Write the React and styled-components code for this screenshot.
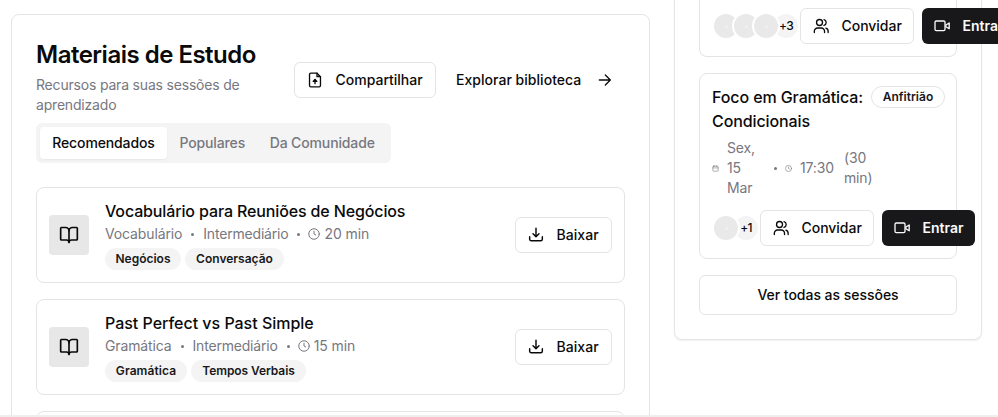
import React from "react";
import styled, { createGlobalStyle } from "styled-components";

const GlobalStyle = createGlobalStyle`
  *, *::before, *::after { box-sizing: border-box; }
  body {
    margin: 0;
    height: 417px;
    overflow: hidden;
    background: #fff;
    color: #0a0a0b;
    font-family: Inter, "Liberation Sans", sans-serif;
    font-size: 14px;
    line-height: 20px;
    -webkit-font-smoothing: antialiased;
  }
`;

const line = "#e4e4e7";
const muted = "#77777f";

const Page = styled.div`
  width: 998px;
  height: 417px;
  overflow: hidden;
  display: flex;
  flex-direction: column;
`;
const Columns = styled.main`
  flex: 1;
  min-height: 0;
  overflow: hidden;
  display: grid;
  grid-template-columns: 639px 308px;
  column-gap: 24px;
  align-items: start;
  padding-left: 11px;
`;
const BottomEdge = styled.div`
  height: 2px;
  flex: none;
  background: #eeeeef;
`;
const Panel = styled.section`
  border: 1px solid #e5e5e5;
  border-radius: 8px;
  padding: 24px;
  background: #fff;
`;
const Materials = styled(Panel)`
  margin-top: 14px;
`;
const Sessions = styled(Panel)`
  height: 340px;
  border-top: 0;
  border-radius: 0 0 8px 8px;
  padding-top: 0;
  box-shadow: 0 1px 2px rgba(0, 0, 0, 0.06);
`;
const Header = styled.header`
  display: flex;
  justify-content: space-between;
  align-items: flex-start;
  height: 84px;
`;
const Title = styled.h2`
  margin: 0 0 4px;
  font-size: 24px;
  line-height: 32px;
  font-weight: 600;
  letter-spacing: -0.5px;
`;
const Description = styled.p`
  margin: 0;
  width: 230px;
  color: ${muted};
  letter-spacing: -0.19px;
`;
const Actions = styled.div`
  display: flex;
  gap: 8px;
  margin-top: 23px;
`;
const Track = styled.span`
  letter-spacing: ${(p) => p.$ls || 0}px;
  white-space: nowrap;
`;
const Button = styled.button`
  display: inline-flex;
  align-items: center;
  justify-content: ${(p) => (p.$center ? "center" : "flex-start")};
  gap: ${(p) => (p.$variant === "ghost" ? 15.5 : 12.5)}px;
  flex: none;
  width: ${(p) => p.$w}px;
  height: ${(p) => p.$h || 36}px;
  padding: 0 12px;
  border: ${(p) => (p.$variant === "outline" ? `1px solid ${line}` : "0")};
  border-radius: 6px;
  background: ${(p) => (p.$variant === "solid" ? "#18181b" : "#fff")};
  color: ${(p) => (p.$variant === "solid" ? "#fafafa" : "inherit")};
  font: inherit;
  font-weight: ${(p) => (p.$variant === "solid" ? 600 : 500)};
  svg { flex: none; }
`;
const Tabs = styled.div`
  display: grid;
  grid-template-columns: 127px 90.5px 129.5px;
  width: 355px;
  height: 40px;
  padding: 4px;
  border-radius: 6px;
  background: #f4f4f4;
`;
const Tab = styled.button`
  border: 0;
  border-radius: 4px;
  padding: 0;
  font: inherit;
  font-weight: 500;
  background: ${(p) => (p.$active ? "#fff" : "transparent")};
  color: ${(p) => (p.$active ? "#0a0a0b" : muted)};
  box-shadow: ${(p) => (p.$active ? "0 1px 2px rgba(0,0,0,.06)" : "none")};
  letter-spacing: -0.13px;
`;
const MaterialList = styled.div`
  display: flex;
  flex-direction: column;
  gap: 16px;
  margin-top: 24px;
`;
const MaterialRow = styled.article`
  display: flex;
  align-items: center;
  gap: 16px;
  height: 96px;
  padding: 12px;
  border: 1px solid ${line};
  border-radius: 8px;
`;
const Thumb = styled.div`
  display: grid;
  place-items: center;
  flex: none;
  width: 40px;
  height: 40px;
  border-radius: 4px;
  background: #e7e7e7;
`;
const Info = styled.div`
  flex: 1;
  min-width: 0;
`;
const ItemTitle = styled.h3`
  margin: -1px 0 1px;
  font-size: 16px;
  line-height: 24px;
  font-weight: 500;
  letter-spacing: ${(p) => p.$ls || 0}px;
`;
const Meta = styled.div`
  display: flex;
  align-items: center;
  gap: 8px;
  color: ${muted};
`;
const Duration = styled.span`
  display: flex;
  align-items: center;
  gap: 4px;
  margin-left: -1px;
`;
const Dot = styled.i`
  width: 3px;
  height: 3px;
  margin: 0 1px;
  border-radius: 50%;
  flex: none;
  background: ${muted};
`;
const Badges = styled.div`
  display: flex;
  gap: 4px;
  margin-top: 4px;
`;
const Badge = styled.span`
  display: inline-flex;
  align-items: center;
  justify-content: center;
  flex: none;
  width: ${(p) => p.$w}px;
  height: 22px;
  border: 1px solid ${(p) => (p.$outline ? line : "transparent")};
  border-radius: 11px;
  background: ${(p) => (p.$outline ? "#fff" : "#f4f4f4")};
  color: #18181b;
  font-size: 12px;
  line-height: 16px;
  font-weight: 600;
  letter-spacing: ${(p) => p.$ls || 0}px;
`;
const SessionCard = styled.article`
  height: ${(p) => p.$h}px;
  margin-bottom: 16px;
  padding: ${(p) => (p.$continued ? 8 : 12)}px 12px 12px;
  border: 1px solid ${line};
  border-top-width: ${(p) => (p.$continued ? 0 : 1)}px;
  border-radius: ${(p) => (p.$continued ? "0 0 8px 8px" : "8px")};
`;
const SessionHead = styled.div`
  display: flex;
  justify-content: space-between;
  align-items: flex-start;
  margin-right: -1px;
`;
const Schedule = styled.div`
  display: grid;
  grid-template-columns: 7px 38px 4px 7px 36px 30px;
  column-gap: 8px;
  align-items: center;
  height: 60px;
  margin: 4px 0 12px;
  color: ${muted};
  letter-spacing: -0.15px;
`;
const DateText = styled.span`
  width: 30px;
`;
const SessionActions = styled.div`
  display: flex;
  width: max-content;
`;
const Avatars = styled.div`
  display: flex;
  align-items: center;
  height: 36px;
`;
const Avatar = styled.span`
  position: relative;
  display: grid;
  place-items: center;
  width: 28px;
  height: 28px;
  margin-right: -8px;
  border: 2px solid #fff;
  border-radius: 50%;
  background: #e9e9e9;
  &::after {
    content: "";
    width: 3px;
    height: 3px;
    border-radius: 50%;
    background: #f1f1f1;
  }
`;
const More = styled.span`
  width: 28px;
  height: 28px;
  border: 2px solid #fff;
  border-radius: 50%;
  background: #f4f4f4;
  font-size: 12px;
  font-weight: 500;
  line-height: 24px;
  text-align: center;
  letter-spacing: -0.7px;
`;
const ButtonPair = styled.div`
  display: flex;
  gap: 8px;
`;

const Svg = ({ size = 16, sw = 2, children }) => (
  <svg width={size} height={size} viewBox="0 0 24 24" fill="none" stroke="currentColor"
    strokeWidth={sw} strokeLinecap="round" strokeLinejoin="round" aria-hidden="true">
    {children}
  </svg>
);
const FileIcon = () => (
  <Svg>
    <path d="M15 1.8H5.8A2 2 0 0 0 3.8 3.8v16.4a2 2 0 0 0 2 2h12.4a2 2 0 0 0 2-2V7Z" />
    <path d="M15 1.8V7h5.2M12 17.5V12" />
    <path d="M9.2 14 12 11l2.8 3Z" fill="currentColor" />
  </Svg>
);
const ArrowIcon = () => (
  <Svg><path d="M3.5 12h16.5M12.5 4.5l7.5 7.5-7.5 7.5" /></Svg>
);
const BookIcon = () => (
  <Svg size={20}>
    <path d="M12 7v14" />
    <path d="M3 18a1 1 0 0 1-1-1V4a1 1 0 0 1 1-1h5a4 4 0 0 1 4 4 4 4 0 0 1 4-4h5a1 1 0 0 1 1 1v13a1 1 0 0 1-1 1h-6a3 3 0 0 0-3 3 3 3 0 0 0-3-3z" />
  </Svg>
);
const DownloadIcon = () => (
  <Svg sw={2.2}>
    <path d="M12 2v12.5M7.5 10l4.5 4.5 4.5-4.5M2.5 14.5v3.7a2.3 2.3 0 0 0 2.3 2.3h14.4a2.3 2.3 0 0 0 2.3-2.3v-3.7" />
  </Svg>
);
const ClockIcon = ({ size = 12 }) => (
  <Svg size={size}><circle cx="12" cy="12" r="10.5" /><path d="M12 6.5V12l3.5 2" /></Svg>
);
const CalendarIcon = () => (
  <Svg size={7}><rect x="3" y="4" width="18" height="17" rx="2" /><path d="M16 2v3M8 2v3M3 10h18" /></Svg>
);
const UsersIcon = () => (
  <Svg>
    <circle cx="9.8" cy="6.8" r="4.5" />
    <path d="M2 21.8v-2a4.8 4.8 0 0 1 4.8-4.8h5.7a4.8 4.8 0 0 1 4.8 4.8v2M16.5 2.4a4.6 4.6 0 0 1 0 8.8M19.3 15.2a4.8 4.8 0 0 1 3.4 4.6v2" />
  </Svg>
);
const VideoIcon = () => (
  <Svg>
    <rect x="1.5" y="4.5" width="15" height="14.5" rx="2" />
    <path d="m22.8 7.5-5 3v2.6l5 3Z" />
  </Svg>
);

const materials = [
  { title: "Vocabulário para Reuniões de Negócios", ls: -0.13, kind: "Vocabulário", kindLs: -0.13, time: "20 min",
    tags: [["Negócios", 76, 0], ["Conversação", 99, 0]] },
  { title: "Past Perfect vs Past Simple", ls: -0.02, kind: "Gramática", kindLs: -0.13, time: "15 min",
    tags: [["Gramática", 82, 0.08], ["Tempos Verbais", 115, -0.08]] },
];

const SessionControls = ({ people, extra }) => (
  <SessionActions>
    <Avatars>
      {Array.from({ length: people }, (_, i) => <Avatar key={i} />)}
      <More>+{extra}</More>
    </Avatars>
    <ButtonPair>
      <Button $variant="outline" $w={114}><UsersIcon /><Track $ls={-0.03}>Convidar</Track></Button>
      <Button $variant="solid" $w={93}><VideoIcon /><Track>Entrar</Track></Button>
    </ButtonPair>
  </SessionActions>
);

export default function App() {
  return (
    <Page>
      <GlobalStyle />
      <Columns>
        <Materials>
          <Header>
            <div>
              <Title>Materiais de Estudo</Title>
              <Description>Recursos para suas sessões de aprendizado</Description>
            </div>
            <Actions>
              <Button $variant="outline" $w={142}><FileIcon /><Track>Compartilhar</Track></Button>
              <Button $variant="ghost" $w={181}><Track $ls={0.03}>Explorar biblioteca</Track><ArrowIcon /></Button>
            </Actions>
          </Header>
          <Tabs>
            <Tab $active>Recomendados</Tab>
            <Tab>Populares</Tab>
            <Tab>Da Comunidade</Tab>
          </Tabs>
          <MaterialList>
            {materials.map((m) => (
              <MaterialRow key={m.title}>
                <Thumb><BookIcon /></Thumb>
                <Info>
                  <ItemTitle $ls={m.ls}>{m.title}</ItemTitle>
                  <Meta>
                    <Track $ls={m.kindLs}>{m.kind}</Track>
                    <Dot />
                    <Track $ls={-0.19}>Intermediário</Track>
                    <Dot />
                    <Duration><ClockIcon /><Track $ls={-0.1}>{m.time}</Track></Duration>
                  </Meta>
                  <Badges>
                    {m.tags.map(([t, w, ls]) => <Badge key={t} $w={w} $ls={ls}>{t}</Badge>)}
                  </Badges>
                </Info>
                <Button $variant="outline" $w={97}><DownloadIcon /><Track $ls={0.05}>Baixar</Track></Button>
              </MaterialRow>
            ))}
            <MaterialRow />
          </MaterialList>
        </Materials>
        <Sessions>
          <SessionCard $h={57} $continued>
            <SessionControls people={3} extra={3} />
          </SessionCard>
          <SessionCard $h={186}>
            <SessionHead>
              <ItemTitle $ls={-0.1}>Foco em Gramática:<br />Condicionais</ItemTitle>
              <Badge $outline $w={74}>Anfitrião</Badge>
            </SessionHead>
            <Schedule>
              <CalendarIcon />
              <DateText>Sex, 15 Mar</DateText>
              <Dot />
              <ClockIcon size={7} />
              <span>17:30</span>
              <span>(30 min)</span>
            </Schedule>
            <SessionControls people={1} extra={1} />
          </SessionCard>
          <Button $variant="outline" $w={258} $h={40} $center><Track $ls={-0.03}>Ver todas as sessões</Track></Button>
        </Sessions>
      </Columns>
      <BottomEdge />
    </Page>
  );
}
